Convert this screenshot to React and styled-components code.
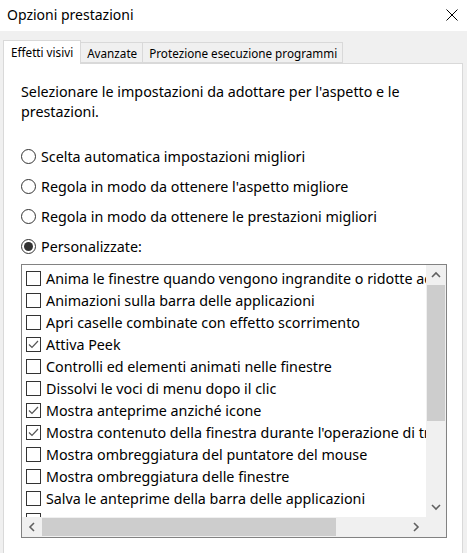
import React from 'react'
import styled, { createGlobalStyle } from 'styled-components'

const GlobalStyle = createGlobalStyle`
  html, body {
    margin: 0;
    padding: 0;
    background: #f0f0f0;
  }
  * {
    box-sizing: border-box;
  }
`

const Window = styled.div`
  width: 467px;
  height: 553px;
  overflow: hidden;
  display: flex;
  flex-direction: column;
  background: #f0f0f0;
  font-family: "Noto Sans", "Open Sans", sans-serif;
  font-size: 14.3px;
  color: #000;
`

const TitleBar = styled.div`
  height: 31px;
  flex-shrink: 0;
  background: #fff;
  display: flex;
  align-items: center;
  justify-content: space-between;
  padding: 0 9px 2px 7px;
  font-size: 14px;
`

const Body = styled.div`
  flex: 1;
  padding: 9px 4px 0 3px;
  display: flex;
  flex-direction: column;
`

const TabStrip = styled.div`
  display: flex;
  align-items: flex-end;
  height: 23px;
  position: relative;
  z-index: 1;
`

const Tab = styled.div`
  height: ${p => (p.$active ? '24px' : '21px')};
  margin-bottom: ${p => (p.$active ? '-1px' : '0')};
  padding: ${p => (p.$active ? '0 7px 2px 7px' : '0 5px 0 6px')};
  background: ${p => (p.$active ? '#fff' : '#f0f0f0')};
  border: 1px solid #d9d9d9;
  border-bottom: ${p => (p.$active ? 'none' : '1px solid #d9d9d9')};
  border-left: ${p => (p.$active ? '1px solid #d9d9d9' : 'none')};
  display: flex;
  align-items: center;
  white-space: nowrap;
  font-size: 11.7px;
`

const Panel = styled.div`
  flex: 1;
  background: #fff;
  border: 1px solid #d9d9d9;
  border-bottom: none;
  padding: 18px 16px 0 17px;
  display: flex;
  flex-direction: column;
`

const Description = styled.p`
  margin: 0 0 19px 0;
  line-height: 20px;
  width: 410px;
`

const RadioRow = styled.label`
  height: 30px;
  display: flex;
  align-items: center;
  gap: 5px;
  white-space: nowrap;
`

const RadioCircle = styled.span`
  width: 15px;
  height: 15px;
  border-radius: 50%;
  border: 1px solid #333;
  display: flex;
  align-items: center;
  justify-content: center;
  flex-shrink: 0;

  &::after {
    content: '';
    width: 9px;
    height: 9px;
    border-radius: 50%;
    background: #333;
    display: ${p => (p.$checked ? 'block' : 'none')};
  }
`

const ListBox = styled.div`
  margin-top: 3px;
  width: 426px;
  height: 274px;
  flex-shrink: 0;
  border: 1px solid #828282;
  display: grid;
  grid-template-columns: 1fr 20px;
  grid-template-rows: 1fr 20px;
`

const Viewport = styled.div`
  overflow: hidden;
  padding: 2px 0 0 4px;
`

const ItemRow = styled.div`
  height: 22px;
  display: flex;
  align-items: center;
  gap: 5px;
  white-space: nowrap;
`

const CheckBox = styled.span`
  width: 15px;
  height: 15px;
  border: 1px solid #333;
  flex-shrink: 0;
  display: flex;
  align-items: center;
  justify-content: center;
`

const VScroll = styled.div`
  background: #f0f0f0;
  display: flex;
  flex-direction: column;
`

const HScroll = styled.div`
  background: #f0f0f0;
  display: flex;
`

const Corner = styled.div`
  background: #f0f0f0;
`

const ArrowButton = styled.div`
  width: 20px;
  height: ${p => (p.$vertical ? '20px' : '100%')};
  flex-shrink: 0;
  display: flex;
  align-items: center;
  justify-content: center;
`

const VTrack = styled.div`
  flex: 1;
  padding: 0 1px;
`

const VThumb = styled.div`
  height: 136px;
  background: #cdcdcd;
`

const HTrack = styled.div`
  flex: 1;
  padding: 1px 0;
`

const HThumb = styled.div`
  width: 294px;
  height: 100%;
  background: #cdcdcd;
`

const Chevron = ({ dir }) => {
  const paths = {
    up: 'M1 6 L5 2 L9 6',
    down: 'M1 2 L5 6 L9 2',
    left: 'M6 1 L2 5 L6 9',
    right: 'M2 1 L6 5 L2 9',
  }
  const vertical = dir === 'up' || dir === 'down'
  return (
    <svg width={vertical ? 10 : 8} height={vertical ? 8 : 10} viewBox={vertical ? '0 0 10 8' : '0 0 8 10'}>
      <path d={paths[dir]} fill="none" stroke="#606060" strokeWidth="1.6" />
    </svg>
  )
}

const Check = () => (
  <svg width="11" height="9" viewBox="0 0 11 9">
    <path d="M1 4.5 L4 7.5 L10 1" fill="none" stroke="#555" strokeWidth="1.2" />
  </svg>
)

const CloseIcon = () => (
  <svg width="12" height="12" viewBox="0 0 12 12">
    <path d="M0.5 0.5 L11.5 11.5 M11.5 0.5 L0.5 11.5" stroke="#000" strokeWidth="1" />
  </svg>
)

const radios = [
  { label: 'Scelta automatica impostazioni migliori' },
  { label: "Regola in modo da ottenere l'aspetto migliore" },
  { label: 'Regola in modo da ottenere le prestazioni migliori' },
  { label: 'Personalizzate:', checked: true },
]

const items = [
  { label: 'Anima le finestre quando vengono ingrandite o ridotte ad icona' },
  { label: 'Animazioni sulla barra delle applicazioni' },
  { label: 'Apri caselle combinate con effetto scorrimento' },
  { label: 'Attiva Peek', checked: true },
  { label: 'Controlli ed elementi animati nelle finestre' },
  { label: 'Dissolvi le voci di menu dopo il clic' },
  { label: 'Mostra anteprime anziché icone', checked: true },
  { label: "Mostra contenuto della finestra durante l'operazione di trascinamento", checked: true },
  { label: 'Mostra ombreggiatura del puntatore del mouse' },
  { label: 'Mostra ombreggiatura delle finestre' },
  { label: 'Salva le anteprime della barra delle applicazioni' },
  { label: '' },
]

export default function App() {
  return (
    <>
      <GlobalStyle />
      <Window>
        <TitleBar>
          <span>Opzioni prestazioni</span>
          <CloseIcon />
        </TitleBar>
        <Body>
          <TabStrip>
            <Tab $active>Effetti visivi</Tab>
            <Tab>Avanzate</Tab>
            <Tab>Protezione esecuzione programmi</Tab>
          </TabStrip>
          <Panel>
            <Description>
              Selezionare le impostazioni da adottare per l'aspetto e le prestazioni.
            </Description>
            {radios.map(r => (
              <RadioRow key={r.label}>
                <RadioCircle $checked={r.checked} />
                {r.label}
              </RadioRow>
            ))}
            <ListBox>
              <Viewport>
                {items.map((it, i) => (
                  <ItemRow key={i}>
                    <CheckBox>{it.checked && <Check />}</CheckBox>
                    {it.label}
                  </ItemRow>
                ))}
              </Viewport>
              <VScroll>
                <ArrowButton $vertical><Chevron dir="up" /></ArrowButton>
                <VTrack><VThumb /></VTrack>
                <ArrowButton $vertical><Chevron dir="down" /></ArrowButton>
              </VScroll>
              <HScroll>
                <ArrowButton><Chevron dir="left" /></ArrowButton>
                <HTrack><HThumb /></HTrack>
                <ArrowButton><Chevron dir="right" /></ArrowButton>
              </HScroll>
              <Corner />
            </ListBox>
          </Panel>
        </Body>
      </Window>
    </>
  )
}
